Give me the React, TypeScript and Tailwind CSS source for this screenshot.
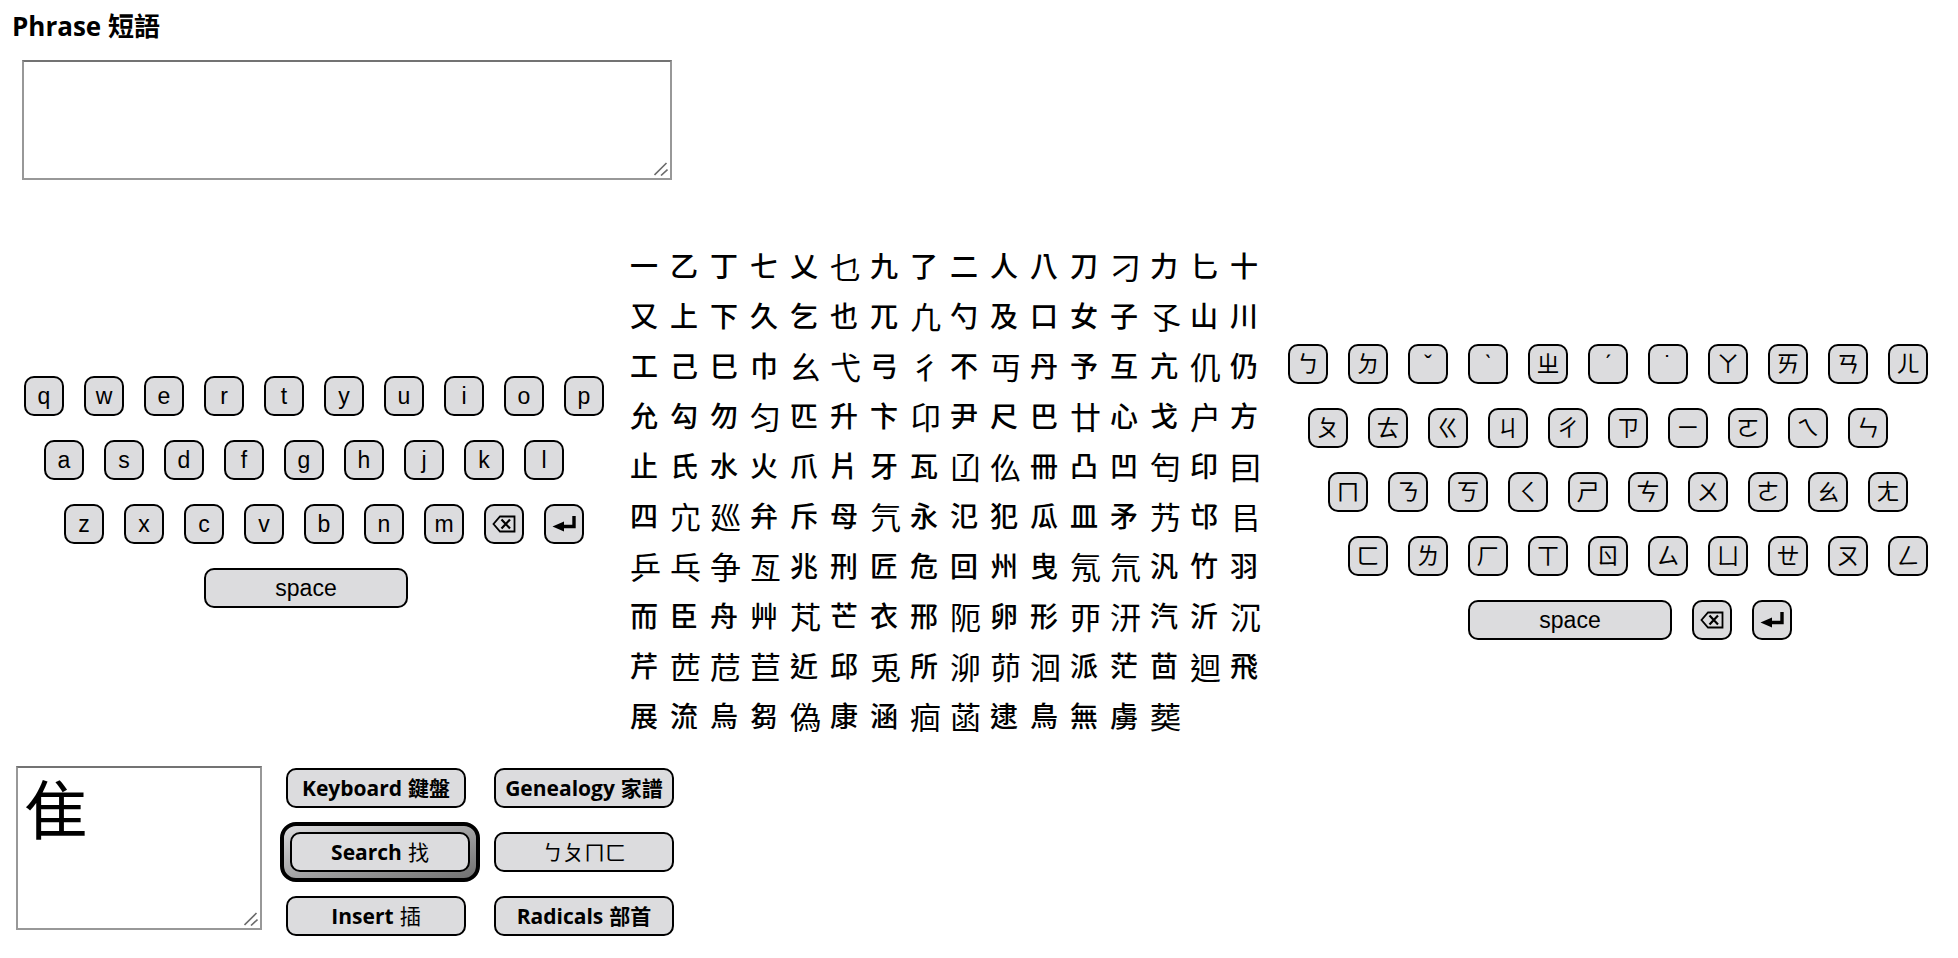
import { useState } from "react";
import type { ReactNode } from "react";

const CHARACTER_ROWS = [
  "一乙丁七乂乜九了二人八刀刁力匕十",
  "又上下久乞也兀凢勺及口女子孓山川",
  "工己巳巾幺弋弓彳不丏丹予互亢仉仍",
  "允勾勿匀匹升卞卬尹尺巴廿心戈户方",
  "止氏水火爪片牙瓦𠙶仫冊凸凹匄印囙",
  "四宂廵弁斥母氕永氾犯瓜皿矛艿邙㠯",
  "乒乓争亙兆刑匠危回州曳氖氘汎竹羽",
  "而臣舟艸芃芒衣邢阨卵形丣汧汽沂沉",
  "芹苉苊苣近邱兎所泖茆洄派茫茴迴飛",
  "展流烏芻偽康涵痐菡逮鳥無虜𦵏",
];

const WIDE_GLYPHS = "乜凢刁孓弋幺彳丏仉匀卬廿户𠙶仫匄囙宂廵氕艿㠯乒乓争亙氖氘芃阨丣汧沉苉苊苣兎泖茆洄迴偽痐菡𦵏";

const BACKSPACE = "backspace";
const ENTER = "enter";
const SPACE = "space";

const LATIN_ROWS = [
  { keys: [..."qwertyuiop"], indent: "pl-0" },
  { keys: [..."asdfghjkl"], indent: "pl-5" },
  { keys: [..."zxcvbnm", BACKSPACE, ENTER], indent: "pl-10" },
  { keys: [SPACE], indent: "pl-45" },
];

const ZHUYIN_ROWS = [
  { keys: [..."ㄅㄉˇˋㄓˊ˙ㄚㄞㄢㄦ"], indent: "pl-0" },
  { keys: [..."ㄆㄊㄍㄐㄔㄗㄧㄛㄟㄣ"], indent: "pl-5" },
  { keys: [..."ㄇㄋㄎㄑㄕㄘㄨㄜㄠㄤ"], indent: "pl-10" },
  { keys: [..."ㄈㄌㄏㄒㄖㄙㄩㄝㄡㄥ"], indent: "pl-15" },
  { keys: [SPACE, BACKSPACE, ENTER], indent: "pl-45" },
];

function BackspaceIcon() {
  return (
    <svg width="24" height="18" viewBox="0 0 24 18" fill="none" stroke="currentColor" strokeWidth="1.8" aria-hidden="true">
      <path d="M8 1.5H22.5V16.5H8L1.5 9Z" />
      <path d="M9.5 4.5L18 13.5M18 4.5L9.5 13.5" strokeWidth="2.2" />
    </svg>
  );
}

function EnterIcon() {
  return (
    <svg width="24" height="18" viewBox="0 0 24 18" fill="none" aria-hidden="true">
      <path d="M22 1V11.5H10" stroke="currentColor" strokeWidth="3.4" />
      <path d="M0.5 11.5L12 6.5V16.5Z" fill="currentColor" />
    </svg>
  );
}

function keyFace(name: string): ReactNode {
  if (name === BACKSPACE) return <BackspaceIcon />;
  if (name === ENTER) return <EnterIcon />;
  return name;
}

type KeyboardProps = {
  label: string;
  rows: { keys: string[]; indent: string }[];
  onKey: (key: string) => void;
};

function Keyboard({ label, rows, onKey }: KeyboardProps) {
  return (
    <div role="group" aria-label={label} className="flex shrink-0 flex-col gap-6">
      {rows.map((row, index) => (
        <div key={index} className={`flex gap-5 ${row.indent}`}>
          {row.keys.map((name) => (
            <button
              key={name}
              type="button"
              aria-label={name}
              onClick={() => onKey(name)}
              className={`flex h-10 items-center justify-center rounded-[10px] border-2 border-black bg-[#dcdcde] text-[23px] leading-none ${
                name === SPACE ? "w-51" : "w-10"
              }`}
            >
              {keyFace(name)}
            </button>
          ))}
        </div>
      ))}
    </div>
  );
}

type ActionProps = { label?: string; han: string; boldHan?: boolean; onClick?: () => void };

function Action({ label, han, boldHan = false, onClick }: ActionProps) {
  return (
    <button
      type="button"
      onClick={onClick}
      className="flex h-10 w-45 items-center justify-center gap-1.5 rounded-[10px] border-2 border-black bg-[#dcdcde] font-['Open_Sans','Noto_Sans_CJK_TC',sans-serif] text-[21px] leading-none whitespace-nowrap"
    >
      {label && <span className="font-bold">{label}</span>}
      <span className={boldHan ? "font-bold" : "font-normal"}>{han}</span>
    </button>
  );
}

type FieldProps = {
  id: string;
  value: string;
  label?: string;
  className: string;
  onChange: (value: string) => void;
};

function Field({ id, value, label, className, onChange }: FieldProps) {
  return (
    <div className="relative w-fit">
      <textarea
        id={id}
        aria-label={label}
        value={value}
        onChange={(event) => onChange(event.target.value)}
        className={`block resize-none border-2 border-[#989898] border-t-[#737373] bg-white font-['Noto_Sans_CJK_TC',sans-serif] outline-none ${className}`}
      />
      <svg
        className="pointer-events-none absolute right-1 bottom-1"
        width="14"
        height="14"
        viewBox="0 0 14 14"
        fill="none"
        stroke="#6b6b6b"
        strokeWidth="1.6"
        aria-hidden="true"
      >
        <path d="M0.5 13L12.5 1M7 13.5L13.5 7.5" />
      </svg>
    </div>
  );
}

export default function App() {
  const [phrase, setPhrase] = useState("");
  const [entry, setEntry] = useState("隹");

  const press = (key: string) => {
    setEntry((text) => {
      if (key === BACKSPACE) return text.slice(0, -1);
      if (key === ENTER) return text + "\n";
      if (key === SPACE) return text + " ";
      return text + key;
    });
  };

  return (
    <main className="bg-white font-['Liberation_Sans','Noto_Sans_CJK_TC',sans-serif] text-black">
      <label
        htmlFor="phrase"
        className="block px-3 pt-2 font-['Open_Sans','Noto_Sans_CJK_TC',sans-serif] text-[26px] leading-9 font-bold"
      >
        Phrase 短語
      </label>
      <div className="mt-4 pl-[22px]">
        <Field id="phrase" value={phrase} onChange={setPhrase} className="h-30 w-[650px] text-[32px]" />
      </div>

      <div className="mt-[60px] flex items-center justify-between pr-[30px] pl-6">
        <div className="pt-1">
          <Keyboard label="Latin keyboard" rows={LATIN_ROWS} onKey={press} />
        </div>
        <div className="pl-2 font-['Noto_Sans_CJK_TC','Noto_Sans_CJK_SC','Noto_Sans_CJK_JP',sans-serif]">
          {CHARACTER_ROWS.map((row) => (
            <div key={row} className="flex h-[50px] items-center">
              {[...row].map((char) => (
                <button
                  key={char}
                  type="button"
                  onClick={() => setPhrase((text) => text + char)}
                  className={`w-10 text-left leading-none ${WIDE_GLYPHS.includes(char) ? "text-[31px]" : "text-[28px] font-medium"}`}
                >
                  {char}
                </button>
              ))}
            </div>
          ))}
        </div>
        <div className="pt-1">
          <Keyboard label="Zhuyin keyboard" rows={ZHUYIN_ROWS} onKey={press} />
        </div>
      </div>

      <div className="mt-[26px] flex items-start pb-6 pl-4">
        <Field
          id="character"
          label="Character"
          value={entry}
          onChange={setEntry}
          className="h-[164px] w-[246px] px-1.5 py-0.5 text-[64px] leading-[72px]"
        />
        <div className="mt-0.5 ml-6 grid grid-cols-[180px_180px] gap-x-7 gap-y-6">
          <Action label="Keyboard" han="鍵盤" boldHan />
          <Action label="Genealogy" han="家譜" boldHan />
          <div className="-mx-1.5 -my-2.5 flex h-15 w-50 items-center justify-center rounded-2xl border-4 border-black bg-linear-to-br from-[#dcdcde] to-[#707070]">
            <Action label="Search" han="找" onClick={() => setEntry((text) => text.trim())} />
          </div>
          <Action han="ㄅㄆㄇㄈ" />
          <Action label="Insert" han="插" onClick={() => setPhrase((text) => text + entry)} />
          <Action label="Radicals" han="部首" boldHan />
        </div>
      </div>
    </main>
  );
}
